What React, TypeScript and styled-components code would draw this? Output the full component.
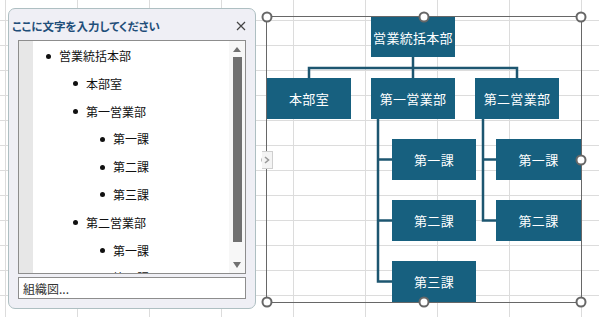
import React from 'react';
import styled, { createGlobalStyle } from 'styled-components';

const JP_FONT = `'Noto Sans CJK JP', 'Noto Sans', sans-serif`;
const NODE_COLOR = '#17607f';
const LINE_COLOR = '#1d5670';
const FRAME_COLOR = '#676767';

const GlobalStyle = createGlobalStyle`
  html, body {
    margin: 0;
    padding: 0;
    background: #ffffff;
    font-family: ${JP_FONT};
  }
`;

interface TextItem {
  text: string;
  level: number;
}

interface ChartNode {
  label: string;
  x: number;
  y: number;
  w: number;
  h: number;
}

const textItems: TextItem[] = [
  { text: '営業統括本部', level: 0 },
  { text: '本部室', level: 1 },
  { text: '第一営業部', level: 1 },
  { text: '第一課', level: 2 },
  { text: '第二課', level: 2 },
  { text: '第三課', level: 2 },
  { text: '第二営業部', level: 1 },
  { text: '第一課', level: 2 },
  { text: '第二課', level: 2 },
];

const chartNodes: ChartNode[] = [
  { label: '営業統括本部', x: 105, y: 1, w: 84, h: 40 },
  { label: '本部室', x: 1, y: 62, w: 84, h: 41 },
  { label: '第一営業部', x: 105, y: 62, w: 84, h: 41 },
  { label: '第二営業部', x: 209, y: 62, w: 84, h: 41 },
  { label: '第一課', x: 126, y: 123, w: 84, h: 41 },
  { label: '第二課', x: 126, y: 184, w: 84, h: 41 },
  { label: '第三課', x: 126, y: 245, w: 84, h: 41 },
  { label: '第一課', x: 230, y: 123, w: 85, h: 41 },
  { label: '第二課', x: 230, y: 184, w: 85, h: 41 },
];

// connector polylines in canvas coords
const connectors: string[] = [
  'M147 41 V52',
  'M43 62 V52 H251 V62',
  'M147 52 V62',
  'M112 103 V265.5 H126',
  'M112 143.5 H126',
  'M112 204.5 H126',
  'M217 103 V204.5 H230',
  'M217 143.5 H230',
];

const handles: [string, string][] = [
  ['0%', '0%'],
  ['50%', '0%'],
  ['100%', '0%'],
  ['0%', '50%'],
  ['100%', '50%'],
  ['0%', '100%'],
  ['50%', '100%'],
  ['100%', '100%'],
];

const Sheet = styled.div`
  position: relative;
  width: 599px;
  height: 317px;
  overflow: hidden;
  background-color: #ffffff;
  background-image: linear-gradient(to right, #dcdcdc 1px, transparent 1px),
    linear-gradient(to bottom, #dcdcdc 1px, transparent 1px);
  background-size: 72px 25px;
  background-position: 5px 20px;
`;

const TextPane = styled.div`
  position: absolute;
  left: 8px;
  top: 8px;
  width: 248px;
  height: 301px;
  box-sizing: border-box;
  border: 1px solid #aebfc2;
  border-radius: 7px;
  background: #efeff5;
  padding: 0 9px 9px 9px;
  display: flex;
  flex-direction: column;
  z-index: 2;
`;

const PaneHeader = styled.div`
  height: 31px;
  margin: 0 0 0 -6px;
  display: flex;
  align-items: center;
  justify-content: space-between;
`;

const PaneTitle = styled.span`
  font-size: 11.5px;
  font-weight: 700;
  color: #1f4e79;
  font-feature-settings: 'palt';
  padding-top: 2px;
`;

const CloseButton = styled.button`
  width: 10px;
  height: 10px;
  padding: 0;
  border: 0;
  background: transparent;
  display: flex;
  margin-top: 2px;
`;

const TextBox = styled.div`
  height: 234px;
  box-sizing: border-box;
  border: 1px solid #8d8d8d;
  background: #ffffff;
  display: flex;
  overflow: hidden;
`;

const Gutter = styled.div`
  width: 14px;
  flex-shrink: 0;
  background: #e7e7e7;
`;

const ItemList = styled.ul`
  flex: 1;
  margin: 0;
  padding: 1px 0 0 0;
  list-style: none;
  overflow: hidden;
`;

const Item = styled.li<{ $level: number }>`
  position: relative;
  height: 27.8px;
  line-height: 27.8px;
  padding-left: ${p => 26 + p.$level * 27}px;
  font-size: 12px;
  color: #111111;
  white-space: nowrap;

  &::before {
    content: '';
    position: absolute;
    left: ${p => 12.5 + p.$level * 27}px;
    top: 11.5px;
    width: 5px;
    height: 5px;
    border-radius: 50%;
    background: #111111;
  }
`;

const ScrollBar = styled.div`
  width: 16px;
  flex-shrink: 0;
  background: #f7f7f7;
  display: flex;
  flex-direction: column;
  align-items: center;
  padding: 6px 0 5px 0;
  box-sizing: border-box;
`;

const ArrowUp = styled.div`
  width: 0;
  height: 0;
  border-left: 4.5px solid transparent;
  border-right: 4.5px solid transparent;
  border-bottom: 5px solid #707070;
`;

const ArrowDown = styled.div`
  width: 0;
  height: 0;
  border-left: 4.5px solid transparent;
  border-right: 4.5px solid transparent;
  border-top: 6px solid #707070;
`;

const Thumb = styled.div`
  width: 9px;
  height: 185px;
  margin: 5px 0 auto 0;
  background: #707070;
`;

const LayoutField = styled.div`
  margin-top: 3px;
  height: 22px;
  box-sizing: border-box;
  border: 1px solid #8d8d8d;
  background: #ffffff;
  display: flex;
  align-items: center;
  padding-left: 4px;
  font-size: 12px;
  color: #333333;
`;

const Canvas = styled.div`
  position: absolute;
  left: 266px;
  top: 16px;
  width: 316px;
  height: 287px;
  box-sizing: border-box;
  border: 1px solid ${FRAME_COLOR};
  z-index: 1;
`;

const Connectors = styled.svg`
  position: absolute;
  left: -1px;
  top: -1px;
  overflow: visible;
`;

const Node = styled.div<{ $x: number; $y: number; $w: number; $h: number }>`
  position: absolute;
  left: ${p => p.$x - 1}px;
  top: ${p => p.$y - 1}px;
  width: ${p => p.$w}px;
  height: ${p => p.$h}px;
  background: ${NODE_COLOR};
  color: #ffffff;
  font-size: 13px;
  display: flex;
  align-items: center;
  justify-content: center;
  letter-spacing: 0.3px;
`;

const Handle = styled.div<{ $x: string; $y: string }>`
  position: absolute;
  left: ${p => p.$x};
  top: ${p => p.$y};
  width: 11px;
  height: 11px;
  box-sizing: border-box;
  border: 2px solid ${FRAME_COLOR};
  border-radius: 50%;
  background: #ffffff;
  transform: translate(-50%, -50%);
  z-index: 2;
`;

const ExpandTab = styled.div`
  position: absolute;
  left: 262px;
  top: 151px;
  width: 11px;
  height: 18px;
  box-sizing: border-box;
  border: 1px solid #cfcfcf;
  border-left: 0;
  background: #f4f4f4;
  display: flex;
  align-items: center;
  justify-content: center;
  z-index: 3;
`;

const TextPaneView = () => (
  <TextPane>
    <PaneHeader>
      <PaneTitle>ここに文字を入力してください</PaneTitle>
      <CloseButton aria-label="閉じる">
        <svg width="10" height="10" viewBox="0 0 10 10">
          <path d="M1 1 L9 9 M9 1 L1 9" stroke="#444" strokeWidth="1.2" />
        </svg>
      </CloseButton>
    </PaneHeader>
    <TextBox>
      <Gutter />
      <ItemList>
        {textItems.map((item, index) => (
          <Item key={`${item.text}-${index}`} $level={item.level}>
            {item.text}
          </Item>
        ))}
      </ItemList>
      <ScrollBar>
        <ArrowUp />
        <Thumb />
        <ArrowDown />
      </ScrollBar>
    </TextBox>
    <LayoutField>組織図...</LayoutField>
  </TextPane>
);

const OrgChart = () => (
  <Canvas>
    <Connectors width="316" height="287">
      {connectors.map(d => (
        <path key={d} d={d} fill="none" stroke={LINE_COLOR} strokeWidth="2.5" />
      ))}
    </Connectors>
    {chartNodes.map((node, index) => (
      <Node key={`${node.label}-${index}`} $x={node.x} $y={node.y} $w={node.w} $h={node.h}>
        {node.label}
      </Node>
    ))}
    {handles.map(([x, y]) => (
      <Handle key={`${x}-${y}`} $x={x} $y={y} />
    ))}
  </Canvas>
);

const App = () => {
  return (
    <>
      <GlobalStyle />
      <Sheet>
        <TextPaneView />
        <OrgChart />
        <ExpandTab>
          <svg width="6" height="8" viewBox="0 0 6 8">
            <path d="M1 1 L4.5 4 L1 7" fill="none" stroke="#9a9a9a" strokeWidth="1.6" />
          </svg>
        </ExpandTab>
      </Sheet>
    </>
  );
};

export default App;
